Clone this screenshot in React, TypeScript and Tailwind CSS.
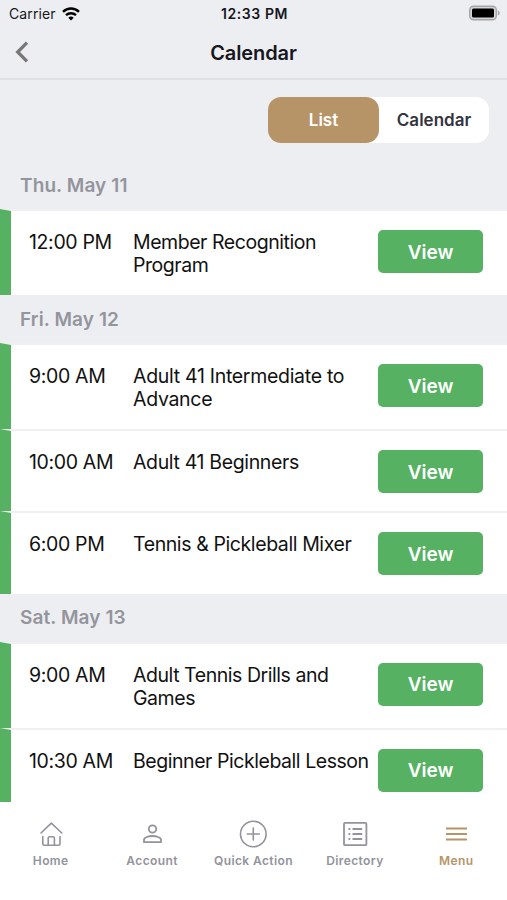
import React from 'react';

interface CalendarEvent {
  time: string;
  name: string;
  tracking: string;
  height: string;
}

interface CalendarDay {
  label: string;
  events: CalendarEvent[];
}

const days: CalendarDay[] = [
  {
    label: 'Thu. May 11',
    events: [
      { time: '12:00 PM', name: 'Member Recognition Program', tracking: 'tracking-[-0.45px]', height: 'h-[86px]' },
    ],
  },
  {
    label: 'Fri. May 12',
    events: [
      { time: '9:00 AM', name: 'Adult 41 Intermediate to Advance', tracking: 'tracking-[-0.3px]', height: 'h-[86px]' },
      { time: '10:00 AM', name: 'Adult 41 Beginners', tracking: 'tracking-[-0.35px]', height: 'h-[82px]' },
      { time: '6:00 PM', name: 'Tennis & Pickleball Mixer', tracking: 'tracking-[-0.4px]', height: 'h-[82.500px]' },
    ],
  },
  {
    label: 'Sat. May 13',
    events: [
      { time: '9:00 AM', name: 'Adult Tennis Drills and Games', tracking: 'tracking-[-0.45px]', height: 'h-[86px]' },
      { time: '10:30 AM', name: 'Beginner Pickleball Lesson', tracking: 'tracking-[-0.45px]', height: 'h-[82px]' },
    ],
  },
];

const stroke = {
  fill: 'none',
  stroke: 'currentColor',
  strokeWidth: 1.6,
  strokeLinecap: 'round' as const,
  strokeLinejoin: 'round' as const,
};

const HomeIcon = () => (
  <svg width="28" height="28" viewBox="0 0 28 28" {...stroke}>
    <path d="M4 13 14.300 3.200 24.800 13" />
    <path d="M5.800 16.500v7.200q0 1.500 1.500 1.500h14.200q1.500 0 1.500-1.500v-7.200" />
    <path d="M11.200 25v-6.700q0-1.500 1.500-1.500h3.200q1.500 0 1.500 1.500V25" />
  </svg>
);

const AccountIcon = () => (
  <svg width="28" height="28" viewBox="0 0 28 28" {...stroke} strokeWidth={1.8}>
    <circle cx="14.500" cy="9" r="3.700" />
    <path d="M6 22.200v-2.500c0-2.300 4.700-3.700 8.500-3.700s8.500 1.400 8.500 3.700v2.500z" />
  </svg>
);

const QuickActionIcon = () => (
  <svg width="28" height="28" viewBox="0 0 28 28" {...stroke}>
    <circle cx="14.300" cy="14" r="12.800" />
    <path d="M14.300 8v12M8.300 14h12" />
  </svg>
);

const DirectoryIcon = () => (
  <svg width="28" height="28" viewBox="0 0 28 28" {...stroke} strokeWidth={1.8}>
    <rect x="3" y="2.800" width="22.400" height="22.400" rx="1" />
    <path d="M12.200 9h8.300M12.200 14h8.300M12.200 19h8.300M8.200 9h.4M8.200 14h.4M8.200 19h.4" />
  </svg>
);

const MenuIcon = () => (
  <svg width="28" height="28" viewBox="0 0 28 28" {...stroke} strokeWidth={2.1} strokeLinecap="butt">
    <path d="M4 8.500h21M4 14h21M4 19.500h21" />
  </svg>
);

const tabs = [
  { name: 'Home', icon: HomeIcon },
  { name: 'Account', icon: AccountIcon },
  { name: 'Quick Action', icon: QuickActionIcon },
  { name: 'Directory', icon: DirectoryIcon },
  { name: 'Menu', icon: MenuIcon, active: true },
];

const StatusBar = () => (
  <div className="grid h-7 grid-cols-3 items-center pl-[9px] pr-[7px]">
    <div className="flex items-center gap-[6px] pb-px text-[14px] tracking-[0.1px]">
      <span>Carrier</span>
      <svg width="18" height="14" viewBox="0 0 18 14" fill="none" stroke="#000" strokeWidth="2.400">
        <path d="M1 4.800a11.500 11.500 0 0 1 16 0" />
        <path d="M4 8.200a7.200 7.200 0 0 1 10 0" />
        <path d="M9 13.500 6.300 10.800a3.900 3.900 0 0 1 5.400 0z" fill="#000" stroke="none" />
      </svg>
    </div>
    <div className="whitespace-nowrap pb-px text-center text-[14px] font-semibold tracking-[0.6px]">12:33 PM</div>
    <div className="flex justify-end pb-[2px]">
      <svg width="31" height="16" viewBox="0 0 31 16">
        <rect x="0.700" y="1.200" width="26.600" height="13.600" rx="3.800" fill="#d5d5d8" stroke="#a5a5a8" strokeWidth="1.400" />
        <rect x="3" y="3.500" width="22" height="9" rx="1.500" fill="#000" />
        <path d="M28.800 5.500v5q2-.8 2-2.500t-2-2.500z" fill="#a5a5a8" />
      </svg>
    </div>
  </div>
);

const EventRow: React.FC<{ event: CalendarEvent }> = ({ event }) => (
  <li
    className={`${event.height} flex shrink-0 items-start border-l-[11px] border-t-2 border-l-[#56b163] border-t-[#f0f0f2] bg-white pl-[18px] pr-6 text-[19.500px] leading-[23px] text-[#111]`}
  >
    <span className="w-[104px] shrink-0 whitespace-nowrap pt-5 tracking-[-0.35px]">{event.time}</span>
    <span className={`w-[245px] shrink-0 pt-5 ${event.tracking}`}>{event.name}</span>
    <button className="mt-[19px] h-[43px] w-[105px] shrink-0 rounded-[5px] bg-[#56b163] pt-px text-[19px] font-semibold text-white">
      View
    </button>
  </li>
);

export default function App() {
  return (
    <div className="flex h-[900px] w-full flex-col overflow-hidden bg-[#edeef2] font-['Inter',sans-serif] text-[#16171c]">
      <StatusBar />
      <header className="grid h-[52px] grid-cols-[44px_1fr_44px] items-center border-b-2 border-[#dfe0e4]">
        <button className="flex h-full items-center pb-[2px] pl-[15px]">
          <svg width="14" height="22" viewBox="0 0 14 22" fill="none" stroke="#777" strokeWidth="3.300">
            <path d="M12 1.700 2.700 11l9.300 9.300" />
          </svg>
        </button>
        <h1 className="pb-px text-center text-[20px] font-semibold tracking-[-0.1px]">Calendar</h1>
      </header>

      {/* View switch */}
      <div className="flex h-[81px] shrink-0 items-start justify-end pr-[18px] pt-[17px]">
        <div className="flex h-[46px] w-[221px] rounded-[13px] bg-white text-[17px] font-semibold">
          <button className="w-[111px] rounded-[13px] bg-[#b79467] pt-[2px] text-white">List</button>
          <button className="w-[110px] pt-[2px] text-[#33343f]">Calendar</button>
        </div>
      </div>

      {/* Agenda */}
      <main className="flex h-[641px] shrink-0 flex-col overflow-hidden">
        {days.map((day) => (
          <section key={day.label} className="shrink-0">
            <h2 className="flex h-12 items-center pl-5 pt-[2px] text-[19px] font-semibold tracking-[0.1px] text-[#94959c]">
              {day.label}
            </h2>
            <ul>
              {day.events.map((event) => (
                <EventRow key={event.name} event={event} />
              ))}
            </ul>
          </section>
        ))}
      </main>

      <nav className="grid h-[98px] shrink-0 grid-cols-5 bg-white pt-[18px]">
        {tabs.map((tab) => (
          <button
            key={tab.name}
            className={`flex flex-col items-center gap-[5px] text-[12px] font-semibold leading-4 tracking-[0.4px] ${
              tab.active ? 'text-[#b79467]' : 'text-[#92939c]'
            }`}
          >
            <tab.icon />
            <span className="whitespace-nowrap">{tab.name}</span>
          </button>
        ))}
      </nav>
    </div>
  );
}
